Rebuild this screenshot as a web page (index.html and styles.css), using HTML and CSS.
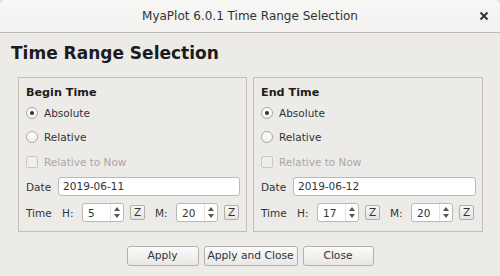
FILE: index.html
```html
<!DOCTYPE html>
<html>
<head>
<meta charset="utf-8">
<title>MyaPlot 6.0.1 Time Range Selection</title>
<link rel="stylesheet" href="styles.css">
</head>
<body>
<div class="window">
  <div class="titlebar">
    <span class="title">MyaPlot 6.0.1 Time Range Selection</span>
    <svg class="close" width="10" height="10" viewBox="0 0 10 10"><path d="M1.5 1.5 L8.5 8.5 M8.5 1.5 L1.5 8.5" stroke="#2e3436" stroke-width="2" fill="none"/></svg>
  </div>
  <div class="content">
    <h1 class="heading">Time Range Selection</h1>
    <div class="panels">
      <div class="panel panel-left">
        <div class="panel-title">Begin Time</div>
        <div class="opt-row"><span class="radio checked"></span><span>Absolute</span></div>
        <div class="opt-row"><span class="radio"></span><span>Relative</span></div>
        <div class="opt-row check-row"><span class="checkbox"></span><span class="disabled">Relative to Now</span></div>
        <div class="date-row"><span class="lbl">Date</span><div class="field">2019-06-11</div></div>
        <div class="time-row">
          <span class="lbl time-lbl">Time</span>
          <span class="lbl unit">H:</span>
          <div class="spinner"><span class="spin-val">5</span><span class="arrows"><span class="up"></span><span class="down"></span></span></div>
          <span class="zbtn">Z</span>
          <span class="lbl unit unit-m">M:</span>
          <div class="spinner"><span class="spin-val">20</span><span class="arrows"><span class="up"></span><span class="down"></span></span></div>
          <span class="zbtn">Z</span>
        </div>
      </div>
      <div class="panel panel-right">
        <div class="panel-title">End Time</div>
        <div class="opt-row"><span class="radio checked"></span><span>Absolute</span></div>
        <div class="opt-row"><span class="radio"></span><span>Relative</span></div>
        <div class="opt-row check-row"><span class="checkbox"></span><span class="disabled">Relative to Now</span></div>
        <div class="date-row"><span class="lbl">Date</span><div class="field">2019-06-12</div></div>
        <div class="time-row">
          <span class="lbl time-lbl">Time</span>
          <span class="lbl unit">H:</span>
          <div class="spinner"><span class="spin-val">17</span><span class="arrows"><span class="up"></span><span class="down"></span></span></div>
          <span class="zbtn">Z</span>
          <span class="lbl unit unit-m">M:</span>
          <div class="spinner"><span class="spin-val">20</span><span class="arrows"><span class="up"></span><span class="down"></span></span></div>
          <span class="zbtn">Z</span>
        </div>
      </div>
    </div>
    <div class="buttons">
      <span class="btn btn-apply">Apply</span>
      <span class="btn btn-applyclose">Apply and Close</span>
      <span class="btn btn-close">Close</span>
    </div>
  </div>
</div>
</body>
</html>
```

FILE: styles.css
```css
html, body {
  margin: 0;
  padding: 0;
  background: #e4e4e4;
}
body {
  font-family: "DejaVu Sans", "Liberation Sans", sans-serif;
  font-size: 10.5px;
  color: #2e3436;
}
.window {
  width: 500px;
  height: 276px;
  background: #edebe8;
  border-radius: 6px 6px 0 0;
  overflow: hidden;
}
.titlebar {
  height: 32px;
  background: linear-gradient(#f7f7f6, #f2f1f0);
  border-bottom: 1px solid #bdbab5;
  display: flex;
  align-items: center;
  justify-content: center;
  position: relative;
}
.title {
  font-size: 12px;
  color: #2e3436;
}
.close {
  position: absolute;
  right: 11px;
  top: 11px;
}
.content {
  display: flex;
  flex-direction: column;
}
.heading {
  margin: 10px 0 0 11px;
  font-size: 17px;
  line-height: 20px;
  font-weight: bold;
  color: #1c1c1c;
}
.panels {
  display: flex;
  gap: 6px;
  margin: 14px 0 0 18px;
}
.panel {
  border: 1px solid #c2bfba;
  padding: 8px 6px 9px 7px;
  display: flex;
  flex-direction: column;
}
.panel-left { width: 214px; }
.panel-right { width: 215px; }
.panel-title {
  font-size: 11.2px;
  font-weight: bold;
  height: 15px;
  line-height: 14px;
  color: #1c1c1c;
}
.opt-row {
  height: 24px;
  display: flex;
  align-items: center;
  gap: 6px;
}
.check-row { height: 25px; }
.radio {
  width: 10px;
  height: 10px;
  border: 1px solid #a9a6a1;
  border-radius: 50%;
  background: linear-gradient(#ffffff, #f1f0ee);
  position: relative;
  flex: none;
}
.radio.checked::after {
  content: "";
  position: absolute;
  left: 3px;
  top: 3px;
  width: 4px;
  height: 4px;
  border-radius: 50%;
  background: #2e3436;
}
.checkbox {
  width: 10px;
  height: 10px;
  border: 1px solid #cbc8c3;
  border-radius: 2px;
  background: #efeeeb;
  flex: none;
}
.disabled { color: #aaa7a2; }
.date-row {
  margin-top: 3px;
  height: 19px;
  display: flex;
  align-items: center;
  gap: 7px;
}
.field {
  flex: 1;
  height: 17px;
  line-height: 17px;
  background: #fff;
  border: 1px solid #bcb9b4;
  border-radius: 3px;
  padding-left: 4px;
  color: #2e3436;
}
.time-row {
  margin-top: 7px;
  height: 19px;
  display: flex;
  align-items: center;
}
.time-lbl { width: 36px; }
.unit { width: 20px; }
.unit-m { width: 21px; margin-left: 10px; }
.spinner {
  width: 40px;
  height: 17px;
  background: #fff;
  border: 1px solid #bcb9b4;
  border-radius: 3px;
  display: flex;
  align-items: center;
}
.spin-val {
  flex: 1;
  padding-left: 5px;
}
.arrows {
  width: 12px;
  height: 17px;
  border-left: 1px solid #e4e2df;
  display: flex;
  flex-direction: column;
  align-items: center;
  justify-content: center;
  gap: 3px;
}
.up {
  width: 0;
  height: 0;
  border-left: 3px solid transparent;
  border-right: 3px solid transparent;
  border-bottom: 4px solid #555753;
}
.down {
  width: 0;
  height: 0;
  border-left: 3px solid transparent;
  border-right: 3px solid transparent;
  border-top: 4px solid #555753;
}
.zbtn {
  margin-left: 6px;
  width: 13px;
  height: 13px;
  line-height: 13px;
  text-align: center;
  border: 1px solid #b1aea9;
  border-radius: 2px;
  background: linear-gradient(#f8f7f6, #e6e4e1);
  font-size: 10.5px;
}
.buttons {
  display: flex;
  justify-content: center;
  gap: 5px;
  margin-top: 14px;
}
.btn {
  height: 18px;
  line-height: 18px;
  border: 1px solid #b4b1ac;
  border-radius: 3px;
  background: linear-gradient(#fbfbfa, #e9e7e4);
  text-align: center;
  font-size: 10.7px;
  color: #2e3436;
}
.btn-apply { width: 70px; }
.btn-applyclose { width: 92px; }
.btn-close { width: 69px; }
```
